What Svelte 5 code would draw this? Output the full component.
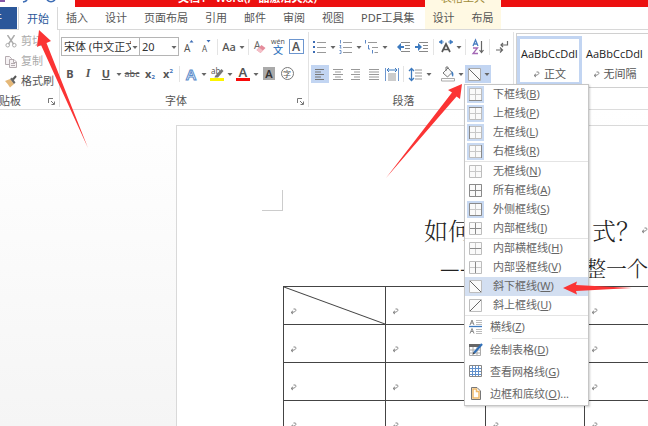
<script>
  const tabs = ['插入', '设计', '页面布局', '引用', '邮件', '审阅', '视图', 'PDF工具集'];
  const contextTabs = ['设计', '布局'];
  const borderGroups = [
    [
      { label: '下框线', key: 'B', dark: 'M1 13.5H14', on: true },
      { label: '上框线', key: 'P', dark: 'M1 1.5H14', on: true },
      { label: '左框线', key: 'L', dark: 'M1.5 1V14', on: true },
      { label: '右框线', key: 'R', dark: 'M13.5 1V14', on: true }
    ],
    [
      { label: '无框线', key: 'N', dark: '' },
      { label: '所有框线', key: 'A', dark: 'M1.5 1.5H13.5V13.5H1.5ZM7.5 1V14M1 7.5H14' },
      { label: '外侧框线', key: 'S', dark: 'M1.5 1.5H13.5V13.5H1.5Z', on: true },
      { label: '内部框线', key: 'I', dark: 'M7.5 2V13M2 7.5H13' }
    ],
    [
      { label: '内部横框线', key: 'H', dark: 'M2 7.5H13' },
      { label: '内部竖框线', key: 'V', dark: 'M7.5 2V13' },
      { label: '斜下框线', key: 'W', diag: 'M2 2L13 13', hover: true },
      { label: '斜上框线', key: 'U', diag: 'M2 13L13 2' }
    ]
  ];
  const rows = [0, 1, 2, 3];
  const cols = [0, 1, 2, 3];
</script>

{#snippet caret()}
  <svg class="caret" width="8" height="18" viewBox="0 0 8 18" aria-hidden="true"><path d="M1.5 8H6.5L4 11Z" fill="#666" /></svg>
{/snippet}

{#snippet enter()}
  <svg class="enter" width="7" height="7" viewBox="0 0 7 7" aria-hidden="true"><path d="M3.5 1H5.2Q6.2 1.2 5.8 2.6Q5.2 4.4 1.5 4.5M3 2.8L1 4.5L3 6" fill="none" stroke="#777" stroke-width=".9" /></svg>
{/snippet}

{#snippet launcher()}
  <button class="launch" aria-label="更多选项"><svg width="7" height="7" viewBox="0 0 7 7"><path d="M.5 5V.5H5M3 3L6 6M6.5 3.5V6.5H3.5" fill="none" stroke="#777" /></svg></button>
{/snippet}

{#snippet borderIcon(item)}
  <svg width="15" height="15" viewBox="0 0 15 15" aria-hidden="true" fill="none">
    <path d="M1.5 1.5H13.5V13.5H1.5Z" fill="#fafafa" stroke="#bdbdbd" />
    {#if item.diag}
      <path d={item.diag} stroke="#666" />
    {:else}
      <path d="M7.5 2V13M2 7.5H13" stroke="#c8c8c8" />
      <path d={item.dark} stroke="#8a8a8a" />
    {/if}
  </svg>
{/snippet}

<div class="app">
  <header class="titlebar">
    <div class="qat">
      <svg width="75" height="7" viewBox="0 0 75 7" aria-hidden="true">
        <path d="M0 0H5V2H0Z" fill="#8557a5" />
        <path d="M27 0Q26 1.5 23 2M47 0Q51 3.5 55 0" fill="none" stroke="#3d6db5" stroke-width="1.6" />
      </svg>
    </div>
    <div class="title">文档1 - Word(产品激活失败)</div>
    <div class="context-title">表格工具</div>
    <div class="title-rest"></div>
  </header>

  <nav class="tabs">
    <button class="file"><span>文件</span></button>
    <button class="tab active">开始</button>
    <div class="tab-list">
      {#each tabs as t}<button class="tab">{t}</button>{/each}
    </div>
    <div class="context">
      {#each contextTabs as t}<button class="tab">{t}</button>{/each}
    </div>
  </nav>

  <section class="ribbon">
    <div class="group clipboard">
      <div class="body">
        <button class="clip off">
          <svg width="12" height="13" viewBox="0 0 12 13" fill="none" stroke="#aaa"><path d="M2.5 0L8.5 9M9.5 0L3.5 9" stroke-width="1.4" /><circle cx="2.7" cy="10.2" r="1.8" /><circle cx="9.3" cy="10.2" r="1.8" /></svg>剪切
        </button>
        <button class="clip off">
          <svg width="12" height="13" viewBox="0 0 12 13" fill="#f6f2f4" stroke="#b5acb0"><path d="M.5 1.5H4.5L6.5 3.5V9.5H.5Z" /><path d="M4.5 4.5H9L11.5 7V12.5H4.5ZM6 8.5H10M6 10.5H10M8.5 4.5V7.5H11" /></svg>复制
        </button>
        <button class="clip">
          <svg width="12" height="13" viewBox="0 0 12 13"><path d="M0 6L5 4L9 9L5 12.5Q3 9 0 6Z" fill="#e5b878" /><path d="M5 4L7 2.5L10.5 7.5L9 9Z" fill="#666" /><path d="M8 4.5L11 1" stroke="#555" stroke-width="2" /></svg>格式刷
        </button>
      </div>
      <div class="caption"><span class="cut">剪贴板</span>{@render launcher()}</div>
    </div>

    <div class="group font">
      <div class="body">
        <div class="line">
          <span class="combo family"><select aria-label="字体"><option>宋体 (中文正文)</option></select>{@render caret()}</span>
          <span class="combo size"><select aria-label="字号"><option>20</option></select>{@render caret()}</span>
          <button class="ico" aria-label="增大字号"><svg width="18" height="18" viewBox="0 0 18 18"><text x="5" y="14" font-size="10" fill="#555">A</text><path d="M10.5 4.5L12.5 2L14.5 4.5Z" fill="#3d6db5" /></svg></button>
          <button class="ico" aria-label="减小字号"><svg width="18" height="18" viewBox="0 0 18 18"><text x="5" y="14" font-size="8" fill="#555">A</text><path d="M9.5 2L11.5 4.5L13.5 2Z" fill="#3d6db5" /></svg></button>
          <i class="sep"></i>
          <button class="ico med">Aa</button>{@render caret()}
          <i class="sep"></i>
          <button class="ico" aria-label="清除格式"><svg width="18" height="18" viewBox="0 0 18 18"><text x="3" y="11" font-size="10" fill="#666">A</text><path d="M5.5 12L10.5 7L14.5 10L9.5 15Z" fill="#e58c9b" /><path d="M5.5 12L8 9.5L12 12.5L9.5 15Z" fill="#f4c0c8" /></svg></button>
          <button class="ico wen" aria-label="拼音指南"><small>wén</small><b>文</b></button>
          <button class="ico" aria-label="字符边框"><span class="framed">A</span></button>
        </div>
        <div class="line">
          <button class="ico bold">B</button>
          <button class="ico ital">I</button>
          <button class="ico und">U</button>{@render caret()}
          <button class="ico strike">abc</button>
          <button class="ico bold">x<sub>2</sub></button>
          <button class="ico bold">x<sup>2</sup></button>
          <i class="sep"></i>
          <button class="ico" aria-label="文本效果"><span class="outline">A</span></button>{@render caret()}
          <button class="ico" aria-label="突出显示"><svg width="18" height="18" viewBox="0 0 18 18"><text x="3" y="9" font-size="8" fill="#555">ab</text><path d="M2 13H16V16H2Z" fill="#fdf500" /><path d="M7 11L13.500 4L15.500 6L10 12.500H6.500Z" fill="#777" /></svg></button>{@render caret()}
          <button class="ico" aria-label="字体颜色"><svg width="18" height="18" viewBox="0 0 18 18"><text x="4.500" y="12" font-size="13" font-weight="600" fill="#555">A</text><path d="M2 13H16V16H2Z" fill="#f80a0a" /></svg></button>{@render caret()}
          <button class="ico" aria-label="字符底纹"><span class="shade">A</span></button>
          <button class="ico" aria-label="带圈字符"><span class="ring">字</span></button>
        </div>
      </div>
      <div class="caption"><span>字体</span>{@render launcher()}</div>
    </div>

    <div class="group para">
      <div class="body">
        <div class="line">
          <button class="ico" aria-label="项目符号"><svg width="18" height="18" viewBox="0 0 18 18"><path d="M2 3H4V5H2ZM2 8H4V10H2ZM2 13H4V15H2Z" fill="#3d6db5" /><path d="M6 4.500H15M6 9.500H15M6 14.500H15" stroke="#999" /></svg></button>{@render caret()}
          <button class="ico" aria-label="编号"><svg width="18" height="18" viewBox="0 0 18 18"><path d="M3.500 2V5.500M2.500 7.500H4L3 10H4.500M2.500 12.500H4V15.500H2.500" fill="none" stroke="#5b86c4" stroke-width=".9" /><path d="M6 4.500H15M6 9.500H15M6 14.500H15" stroke="#999" /></svg></button>{@render caret()}
          <button class="ico" aria-label="多级列表"><svg width="18" height="18" viewBox="0 0 18 18"><path d="M2.500 2V5.500M5.500 7V11H7M9.500 12V15.500" fill="none" stroke="#5b86c4" /><path d="M5 4.500H14M9 9.500H15M11.500 14.500H15" stroke="#999" /></svg></button>{@render caret()}
          <i class="sep none"></i>
          <button class="ico" aria-label="减少缩进"><svg width="18" height="18" viewBox="0 0 18 18"><path d="M2 9L6 5V8H9V10H6V13Z" fill="#3d7abf" /><path d="M6 4.500H15M10 7.500H15M10 10.500H15M6 13.500H15" stroke="#888" /></svg></button>
          <button class="ico" aria-label="增加缩进"><svg width="18" height="18" viewBox="0 0 18 18"><path d="M9 9L5 5V8H2V10H5V13Z" fill="#3d7abf" /><path d="M6 4.500H15M10 7.500H15M10 10.500H15M6 13.500H15" stroke="#888" /></svg></button>
          <i class="sep"></i>
          <button class="ico" aria-label="中文版式"><svg width="18" height="18" viewBox="0 0 18 18"><path d="M5 14L9 6L13 14M6.500 11.500H11.500" fill="none" stroke="#555" stroke-width="1.700" /><path d="M2 4L5 2V6ZM16 4L13 2V6ZM4 4H7M11 4H14" fill="#3d7abf" stroke="#3d7abf" stroke-width=".7" /></svg></button>{@render caret()}
          <i class="sep"></i>
          <button class="ico" aria-label="排序"><svg width="18" height="18" viewBox="0 0 18 18" fill="none"><path d="M4 8L6.500 2L9 8M5 6H8" stroke="#4a7fc1" stroke-width="1.300" /><path d="M4 10H8.500L4 15.500H9" stroke="#a468b5" stroke-width="1.300" /><path d="M12.500 3V14M10.500 12L12.500 14.500L14.500 12" stroke="#666" stroke-width="1.200" /></svg></button>
          <i class="sep"></i>
          <button class="ico" aria-label="显示编辑标记"><svg width="18" height="18" viewBox="0 0 18 18" fill="none" stroke="#666" stroke-width="1.200"><path d="M14.500 3V7H8M10 5L8 7L10 9M3 12H9M7 9.500L9.500 12L7 14.500" /></svg></button>
        </div>
        <div class="line">
          <button class="ico on" aria-label="左对齐"><svg width="18" height="18" viewBox="0 0 18 18"><path d="M4 4.500H13M4 7H10M4 9.500H13M4 12H10M4 14.500H13" stroke="#777" /></svg></button>
          <button class="ico" aria-label="居中"><svg width="18" height="18" viewBox="0 0 18 18"><path d="M4 4.500H14M6 7H12M4 9.500H14M6 12H12M4 14.500H14" stroke="#999" /></svg></button>
          <button class="ico" aria-label="右对齐"><svg width="18" height="18" viewBox="0 0 18 18"><path d="M4 4.500H13M7 7H13M4 9.500H13M7 12H13M4 14.500H13" stroke="#999" /></svg></button>
          <button class="ico" aria-label="两端对齐"><svg width="18" height="18" viewBox="0 0 18 18"><path d="M4 4.500H14M4 7H14M4 9.500H14M4 12H14M4 14.500H14" stroke="#999" /></svg></button>
          <button class="ico" aria-label="分散对齐"><svg width="18" height="18" viewBox="0 0 18 18"><path d="M2.500 3V16M15.500 3V16" stroke="#6d96cf" /><path d="M4 5H14M6 3L4 5L6 7M12 3L14 5L12 7" fill="none" stroke="#3d7abf" /><path d="M5 9H13M5 11H13M5 13H13M5 15H13" stroke="#999" /></svg></button>
          <i class="sep"></i>
          <button class="ico" aria-label="行距"><svg width="18" height="18" viewBox="0 0 18 18"><path d="M4.500 4V15M2 6L4.500 3.500L7 6M2 13L4.500 15.500L7 13" fill="none" stroke="#3d7abf" stroke-width="1.300" /><path d="M8 5H15M8 8H15M8 11H15M8 14H15" stroke="#999" /></svg></button>{@render caret()}
          <i class="sep none"></i>
          <button class="ico" aria-label="底纹"><svg width="18" height="18" viewBox="0 0 18 18"><path d="M4 8L9 3L13 7.500L8.500 12Z" fill="#fafafa" stroke="#777" /><path d="M7 6V2H9V4" fill="none" stroke="#777" /><path d="M12 6Q15.500 7 14 12Q12 10 12.500 7Z" fill="#3d7abf" /><path d="M2.500 13.500H15.500V16H2.500Z" fill="#fff" stroke="#aaa" /></svg></button>{@render caret()}
          <div class="borders">
            <button class="split" aria-label="边框"><svg width="18" height="18" viewBox="0 0 18 18"><path d="M3.500 3.500H15.500V15.500H3.500Z" fill="#fafafa" stroke="#aaa" /><path d="M4 4L15 15" stroke="#666" /></svg>{@render caret()}</button>
            <div class="menu" role="menu">
              {#each borderGroups as group}
                <div class="section">
                  {#each group as item}
                    <button class="item" class:hover={item.hover} role="menuitem">
                      <span class="slot" class:checked={item.on}>{@render borderIcon(item)}</span><span>{item.label}(<u>{item.key}</u>)</span>
                    </button>
                  {/each}
                </div>
              {/each}
              <div class="section tall inset">
                <button class="item" role="menuitem">
                  <span class="slot"><svg width="15" height="15" viewBox="0 0 15 15" fill="none" stroke="#888"><path d="M2 6L4 1L6 6M3 4H5M2 14.500L4 9.500L6 14.500M3 12.500H5" /><path d="M8 1.500H14M8 3.500H14M8 5.500H14M8 10.500H14M8 12.500H14M8 14.500H14" stroke="#bbb" /><path d="M1 7.500H14" stroke="#3d7abf" stroke-width="1.300" /></svg></span><span>横线(<u>Z</u>)</span>
                </button>
              </div>
              <div class="section tall">
                <button class="item" role="menuitem">
                  <span class="slot"><svg width="15" height="15" viewBox="0 0 15 15" fill="none"><path d="M1.500 2.500H12.500V13.500H1.500ZM5 5V13M9 5V13M2 8H12M2 11H12" stroke="#aaa" /><path d="M1 2H12V5H1Z" fill="#666" /><path d="M6 11L14 2" stroke="#2f6fb8" stroke-width="2.200" /><path d="M4.500 12.500L5.500 10L7 11.500Z" fill="#444" /></svg></span><span>绘制表格(<u>D</u>)</span>
                </button>
                <button class="item" role="menuitem">
                  <span class="slot"><svg width="15" height="15" viewBox="0 0 15 15" fill="none"><path d="M1.500 1.500H13.500V12.500H1.500Z" stroke="#888" /><path d="M4.500 2V12M7.500 2V12M10.500 2V12M2 4.500H13M2 7.500H13M2 10.500H13" stroke="#5f8fcb" /></svg></span><span>查看网格线(<u>G</u>)</span>
                </button>
                <button class="item" role="menuitem">
                  <span class="slot"><svg width="15" height="15" viewBox="0 0 15 15"><path d="M3.500 1.500H9L12.500 5V13.500H3.500Z" fill="#fff" stroke="#777" /><path d="M5 3H8.500V5.500H11V12H5Z" fill="#fff" stroke="#efb96a" stroke-width="1.500" /></svg></span><span>边框和底纹(<u>O</u>)...</span>
                </button>
              </div>
            </div>
          </div>
        </div>
      </div>
      <div class="caption"><span>段落</span></div>
    </div>

    <div class="group styles">
      <div class="gallery">
        <button class="style picked"><span class="sample">AaBbCcDdI</span><span class="name">{@render enter()}正文</span></button>
        <button class="style"><span class="sample">AaBbCcDdI</span><span class="name">{@render enter()}无间隔</span></button>
      </div>
    </div>
  </section>

  <main class="canvas">
    <article class="page">
      <div class="crop"></div>
      <h1><span class="lead">如何</span><span class="mark">式？</span>{@render enter()}</h1>
      <h2><span class="dash">—</span><span class="dash">—</span><span class="tail">整一个</span></h2>
      <table>
        <tbody>
          {#each rows as r}
            <tr>
              {#each cols as c}
                <td class:first={c === 0}>
                  {#if r === 0 && c === 0}
                    <svg class="diag" viewBox="0 0 100 38" preserveAspectRatio="none" aria-hidden="true"><path d="M0 0L100 38" stroke="#444" /></svg>
                  {/if}
                  {@render enter()}
                </td>
              {/each}
            </tr>
          {/each}
        </tbody>
      </table>
    </article>
  </main>

  <svg class="arrows" width="648" height="426" viewBox="0 0 648 426" fill="#fb3434" aria-hidden="true">
    <path d="M39 30L51 41L46.500 43L88 148L41 45L37 47Z" />
    <path d="M462 84L460 99L456.500 96.500L386 178L452 92.500L448 90Z" />
    <path d="M563 288L577 281.500L576 285L632 288L576 291L577 294.500Z" />
  </svg>
</div>

<style>
  :global(body) { margin: 0; }
  .app {
    position: relative; height: 100vh; overflow: hidden;
    display: flex; flex-direction: column; background: #fff;
    font: 11px/16px "Noto Sans", "Noto Sans CJK SC", sans-serif; color: #555;
  }
  button { font: inherit; color: inherit; background: none; border: 0; padding: 0; margin: 0; white-space: nowrap; }
  svg { display: block; flex: none; }

  .titlebar { display: flex; height: 7px; flex: none; }
  .titlebar > div { display: flex; align-items: flex-end; overflow: hidden; white-space: nowrap; line-height: 16px; padding-bottom: 1px; box-sizing: border-box; }
  .titlebar > .qat { flex: 0 0 75px; padding: 0; }
  .titlebar > .title { flex: 0 0 350px; background: #ec1010; color: #fff; justify-content: center; font-weight: 600; padding-right: 5px; }
  .titlebar > .context-title { flex: 0 0 76px; background: #fff9e3; color: #a08b3a; justify-content: center; }
  .title-rest { flex: 1; background: #ec1010; }

  .tabs { display: flex; flex: none; height: 22px; border-bottom: 1px solid #d8d8d8; }
  .file { display: flex; align-items: center; justify-content: flex-end; width: 17px; overflow: hidden; background: #2b579a; color: #fff; }
  .file span { padding-right: 15px; }
  .tab.active { width: 40px; margin: 0 0 -1px 1px; border: 1px solid #d8d8d8; border-width: 0 1px; background: #fff; color: #2b579a; }
  .tab-list { display: flex; gap: 17px; padding: 0 11px 0 8px; }
  .context { display: flex; gap: 17px; padding: 0 8px 0 7px; background: #fff9e3; }

  .ribbon { display: flex; flex: none; height: 79px; border-bottom: 1px solid #dcdcdc; }
  .group { display: flex; flex-direction: column; border-right: 1px solid #e2e2e2; box-sizing: border-box; padding-top: 1px; margin: 2px 0; }
  .body { flex: 1; }
  .clipboard { width: 60px; padding-top: 0; margin-top: 0; }
  .font { width: 249px; padding-left: 1px; }
  .para { width: 205px; padding-left: 2px; }
  .styles { flex: 1; min-width: 0; border: 0; padding: 1px 0 0 2px; }
  .clip { display: flex; align-items: center; gap: 4px; height: 20px; padding-left: 5px; }
  .clipboard .body { padding-top: 1px; }
  .off { color: #aaa; }
  .caption { position: relative; display: flex; justify-content: center; height: 12px; line-height: 12px; padding-right: 17px; }
  .clipboard .caption { justify-content: flex-start; overflow: hidden; }
  .cut { display: flex; flex: none; justify-content: flex-end; width: 21px; white-space: nowrap; }
  .launch { position: absolute; right: 4px; top: 3px; }

  .line { display: flex; align-items: center; height: 27px; }
  .ico { width: 18px; height: 18px; display: flex; align-items: center; justify-content: center; line-height: 18px; }
  .on { background: #c2d5f2; }
  .sep { width: 5px; height: 16px; flex: none; background: linear-gradient(90deg, transparent 2px, #e4e4e4 2px, #e4e4e4 3px, transparent 3px); }
  .para .sep { width: 6px; }
  .para .sep.none { background: none; }
  .combo { display: flex; align-items: center; box-sizing: border-box; height: 19px; border: 1px solid #b5b5b5; background: #fff; overflow: hidden; }
  .family { width: 79px; }
  .size { width: 39px; border-left: 0; }
  .combo select { appearance: none; flex: 1; min-width: 0; width: 0; border: 0; background: none; padding: 0 0 0 2px; margin: 0; font: inherit; color: #333; text-overflow: clip; }
  .med { font-weight: 500; }
  .bold { font-weight: 700; }
  .bold sub, .bold sup { font-size: 6px; line-height: 6px; color: #3d6db5; }
  .bold sub { align-self: flex-end; padding-bottom: 3px; }
  .bold sup { align-self: flex-start; padding-top: 3px; }
  .ital { font: italic 700 12px "Liberation Serif", serif; }
  .und { font-weight: 700; text-decoration: underline; }
  .strike { font-size: 9px; text-decoration: line-through; }
  .wen { flex-direction: column; }
  .wen small { font-size: 7px; line-height: 7px; }
  .wen b { font-size: 10px; line-height: 10px; color: #3d7abf; font-weight: 500; }
  .framed { width: 13px; height: 13px; border: 1px solid #6d96cf; font-weight: 600; font-size: 12px; line-height: 13px; }
  .outline { font-size: 15px; font-weight: 600; color: #fff; -webkit-text-stroke: 1px #5a8ccb; }
  .shade { width: 12px; height: 13px; background: #aaa; color: #333; font-weight: 600; line-height: 13px; }
  .ring { width: 11px; height: 11px; border: 1px solid #777; border-radius: 50%; font-size: 8px; line-height: 11px; }

  .borders { position: relative; }
  .split { display: flex; background: #c2d5f2; }
  .menu { position: absolute; z-index: 2; left: -1px; top: 19px; width: 123px; background: #fff; border: 1px solid #c6c6c6; box-shadow: 1px 1px 2px #0003; color: #666; }
  .section + .section { border-top: 1px solid #e4e4e4; }
  .section.inset + .section { border-image: linear-gradient(90deg, transparent 28px, #e4e4e4 28px) 1; }
  .item { display: flex; align-items: center; gap: 9px; width: 100%; height: 19px; padding-left: 2px; text-align: left; }
  .tall .item { height: 22px; gap: 6px; padding-left: 2px; }
  .item.hover { background: #d3dff1; }
  .slot { display: flex; align-items: center; justify-content: center; width: 17px; height: 17px; }
  .checked { background: #c8d9f2; }
  u { text-underline-offset: 1px; }

  .gallery { display: flex; height: 53px; border: 1px solid #d0d0d0; border-right: 0; overflow: hidden; }
  .style { box-sizing: border-box; flex: 0 0 65px; height: 49px; margin-top: 2px; border: 3px solid transparent; display: flex; flex-direction: column; align-items: center; gap: 5px; padding-top: 7px; }
  .picked { border-color: #c2d5f2; }
  .sample { font: 11px/16px "Open Sans", sans-serif; color: #222; }
  .name { display: flex; align-items: center; gap: 4px; line-height: 14px; }

  .canvas { flex: 1; min-height: 0; display: flex; padding: 15px 0 0 176px; background: linear-gradient(#fff, #f5f5f5); }
  .page { flex: 1; min-width: 0; overflow: hidden; padding: 64px 0 0 106px; background: #fff; border: 1px solid #d9d9d9; border-width: 1px 0 0 1px; color: #222; }
  .crop { width: 20px; height: 20px; margin-left: -21px; border: 1px solid #ccc; border-width: 0 1px 1px 0; }
  h1, h2 { display: flex; align-items: center; margin: 0; font-weight: 300; white-space: nowrap; font-family: "Noto Serif CJK SC", "Noto Sans CJK SC", serif; }
  h1 { font-size: 24px; line-height: 38px; padding-left: 141px; }
  h2 { font-size: 21px; line-height: 36px; padding: 0 0 1px 157px; }
  .dash { font-weight: 700; width: 21px; }
  .lead { width: 168px; }
  .mark { width: 49px; }
  .tail { padding-left: 105px; }
  table { border-collapse: collapse; table-layout: fixed; width: 402px; }
  td { position: relative; box-sizing: border-box; height: 38px; border: 1px solid #444; padding: 11px 0 0 6px; vertical-align: middle; }
  td.first { width: 102px; }
  .diag { position: absolute; inset: 0; width: 100%; height: 100%; }

  .arrows { position: absolute; z-index: 3; left: 0; top: 0; pointer-events: none; }
</style>
